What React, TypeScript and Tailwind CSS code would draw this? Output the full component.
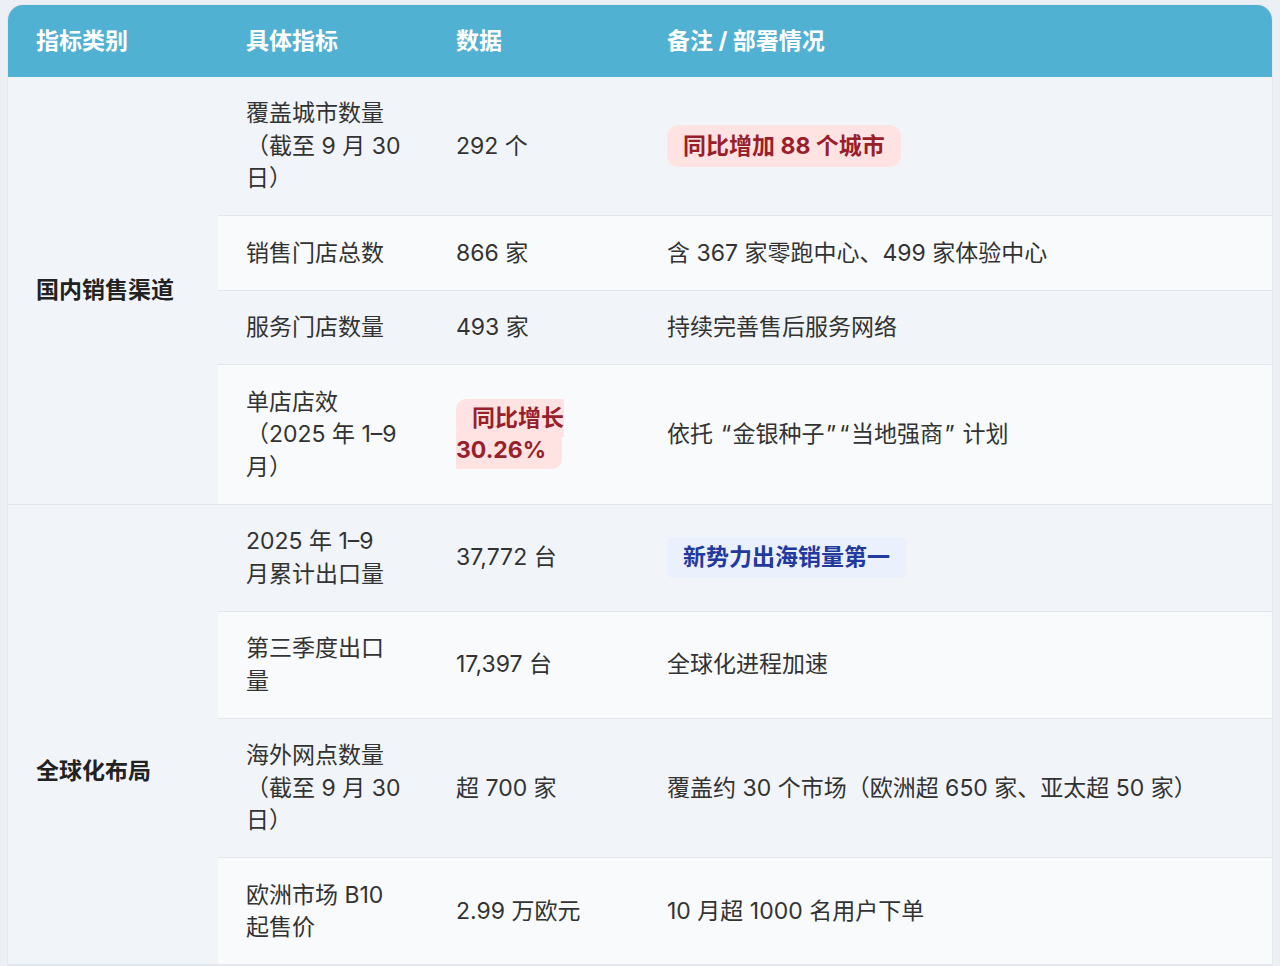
import type { ReactNode } from "react";

type Row = {
  metric: ReactNode;
  value: ReactNode;
  note: ReactNode;
};

type Group = {
  category: string;
  offset: string;
  rows: Row[];
};

// curly quotes render a touch narrow in the Latin font, pad them out a bit
function Q({ children }: { children: string }) {
  return <span className="px-[1.5px]">{children}</span>;
}

const GROUPS: Group[] = [
  {
    category: "国内销售渠道",
    offset: "",
    rows: [
      {
        metric: (
          <>
            覆盖城市数量
            <br />
            （截至 9 月 30
            <br />
            日）
          </>
        ),
        value: "292 个",
        note: (
          <span className="inline-block rounded-xl bg-red-100 px-4 py-[5px] font-bold text-[#98202a]">
            同比增加 88 个城市
          </span>
        ),
      },
      { metric: "销售门店总数", value: "866 家", note: "含 367 家零跑中心、499 家体验中心" },
      { metric: "服务门店数量", value: "493 家", note: "持续完善售后服务网络" },
      {
        metric: (
          <>
            单店店效
            <br />
            （2025 年 1–9
            <br />
            月）
          </>
        ),
        value: (
          <span className="rounded-[10px] bg-red-100 px-4 py-[5px] font-bold text-[#98202a]">
            同比增长
            <br />
            30.26%
          </span>
        ),
        note: (
          <>
            依托 <Q>“</Q>金银种子<Q>”</Q>
            <Q>“</Q>当地强商<Q>”</Q> 计划
          </>
        ),
      },
    ],
  },
  {
    category: "全球化布局",
    offset: "pt-[74px]",
    rows: [
      {
        metric: (
          <>
            2025 年 1–9
            <br />
            月累计出口量
          </>
        ),
        value: "37,772 台",
        note: (
          <span className="inline-block rounded-md bg-[#eaf0fc] px-4 py-1 font-bold text-[#22399f]">
            新势力出海销量第一
          </span>
        ),
      },
      {
        metric: (
          <>
            第三季度出口
            <br />量
          </>
        ),
        value: "17,397 台",
        note: "全球化进程加速",
      },
      {
        metric: (
          <>
            海外网点数量
            <br />
            （截至 9 月 30
            <br />
            日）
          </>
        ),
        value: "超 700 家",
        note: "覆盖约 30 个市场（欧洲超 650 家、亚太超 50 家）",
      },
      {
        metric: (
          <>
            欧洲市场 B10
            <br />
            起售价
          </>
        ),
        value: "2.99 万欧元",
        note: "10 月超 1000 名用户下单",
      },
    ],
  },
];

const HEADERS = ["指标类别", "具体指标", "数据", "备注 / 部署情况"];

export default function App() {
  return (
    <div
      className="min-h-screen bg-[#eceff4] px-2 pt-[5px] text-[23px] leading-[32.5px] text-[#333]"
      style={{ fontFamily: 'Inter, "Noto Sans CJK SC", sans-serif' }}
    >
      <div className="overflow-hidden rounded-t-[15px] ring-1 ring-[#e3e7ee]">
        <table className="w-full table-fixed border-collapse">
          <colgroup>
            <col className="w-[210px]" />
            <col className="w-[210px]" />
            <col className="w-[211px]" />
            <col />
          </colgroup>
          <thead>
            <tr className="bg-[#51b1d3]">
              {HEADERS.map((h) => (
                <th key={h} className="whitespace-pre px-7 py-[19.5px] text-left font-bold text-white">
                  {h}
                </th>
              ))}
            </tr>
          </thead>
          <tbody>
            {GROUPS.flatMap((group) =>
              group.rows.map((row, i) => (
                <tr key={`${group.category}-${i}`} className="odd:bg-[#f1f4f9] even:bg-[#f8fafc]">
                  {i === 0 && (
                    <td
                      rowSpan={group.rows.length}
                      className={`border-b border-[#e2e7ee] bg-[#f1f4f9] px-7 align-middle font-bold text-[#222] ${group.offset}`}
                    >
                      {group.category}
                    </td>
                  )}
                  <td className="whitespace-nowrap border-b border-[#e2e7ee] px-7 py-[20.5px] align-middle">
                    {row.metric}
                  </td>
                  <td className="whitespace-nowrap border-b border-[#e2e7ee] px-7 py-[20.5px] align-middle">
                    {row.value}
                  </td>
                  <td className="whitespace-nowrap border-b border-[#e2e7ee] px-7 py-[20.5px] align-middle">
                    {row.note}
                  </td>
                </tr>
              ))
            )}
          </tbody>
        </table>
      </div>
    </div>
  );
}
